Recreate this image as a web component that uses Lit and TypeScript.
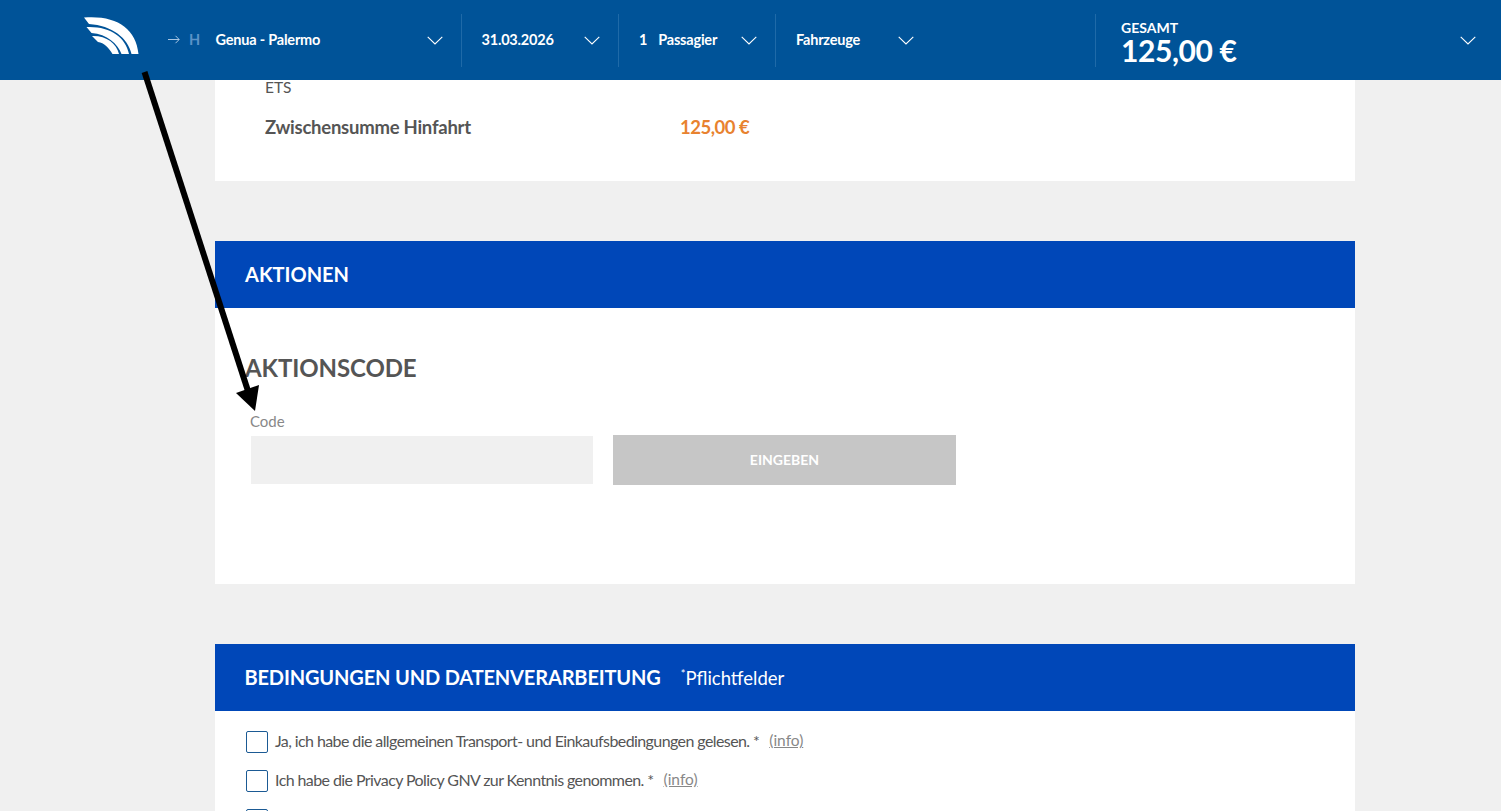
import { LitElement, html, css, svg } from 'lit';
import { customElement } from 'lit/decorators.js';

const chevron = html`<svg class="chev" width="16" height="9" viewBox="0 0 16 9" fill="none"><path d="M.7.9 8 8 15.3.9" stroke="currentColor" stroke-width="1.1"/></svg>`;

@customElement('app-root')
export class AppRoot extends LitElement {
  static styles = css`
    :host {
      display: block;
      position: relative;
      height: 811px;
      overflow: hidden;
      background: #f0f0f0;
      color: #555;
      font-family: Lato, "Open Sans", sans-serif;
    }

    .topbar {
      display: flex;
      align-items: center;
      height: 80px;
      background: #005398;
      color: #fff;
      font-size: 14.500px;
      letter-spacing: -0.2px;
      font-weight: 700;
    }
    .logo { width: 167px; align-self: flex-start; padding: 17px 0 0 84px; box-sizing: border-box; flex: none; }
    .logo svg { display: block; }

    .seg {
      display: flex;
      align-items: center;
      justify-content: space-between;
      box-sizing: border-box;
      height: 53px;
      flex: none;
      border-right: 1px solid #1f6aa8;
    }
    .seg .txt { margin-bottom: 1px; }
    .route { width: 295px; padding-right: 18px; }
    .date { width: 157px; padding: 0 18px 0 19.500px; }
    .pax { width: 157px; padding: 0 18px 0 20px; }
    .veh { width: 320px; padding: 0 181px 0 20px; }
    .route .left { display: flex; align-items: center; }
    .route .arrow { width: 21px; color: #a9c6e2; margin-left: 1px; }
    .route .arrow svg { display: block; }
    .route .h { width: 26.500px; color: #5b92c7; }
    .count { margin-right: 11px; }

    .total { flex: 1; display: flex; align-items: center; justify-content: space-between; padding: 0 25px; }
    .total .amount { padding-top: 7px; }
    .total .lbl { font-size: 14px; line-height: 14px; letter-spacing: 0; }
    .total .sum { font-size: 30px; font-weight: 700; line-height: 31px; letter-spacing: -0.4px; }

    main { width: 1140px; margin-left: 215px; }
    .card { background: #fff; }
    .summary { height: 101px; padding-left: 50px; box-sizing: border-box; }
    .ets { font-size: 15.500px; line-height: 14px; height: 14px; }
    .sub { display: flex; margin-top: 21px; font-size: 18.500px; font-weight: 700; line-height: 24px; letter-spacing: -0.25px; }
    .sub span:first-child { width: 415px; }
    .sub .price { color: #e8822f; letter-spacing: -0.5px; }

    .band {
      display: flex;
      align-items: center;
      height: 67px;
      box-sizing: border-box;
      padding: 0 0 2px 30px;
      margin-top: 60px;
      background: #0047b8;
      color: #fff;
    }
    .band h2 { margin: 0; font-size: 20px; font-weight: 700; }
    .band.long h2 { letter-spacing: -0.15px; margin-left: -0.5px; }
    .band .req { margin: 2px 0 0 20px; font-size: 18.500px; }
    .band .req sup { font-size: 11px; line-height: 0; }

    .promo { height: 276px; box-sizing: border-box; padding: 45px 0 0 30px; }
    .promo h3 { margin: 0; font-size: 24px; font-weight: 700; line-height: 30px; letter-spacing: -0.1px; }
    .field { margin: 30px 0 0 5px; font-size: 15px; line-height: 17px; color: #888; }
    .form { display: flex; align-items: center; margin: 5px 0 0 6px; }
    .input { width: 342px; height: 48px; background: #f0f0f0; }
    .send {
      width: 343px;
      height: 50px;
      margin-left: 20px;
      padding-bottom: 2px;
      box-sizing: border-box;
      display: flex;
      align-items: center;
      justify-content: center;
      background: #c6c6c6;
      color: #fff;
      font-size: 14px;
      font-weight: 700;
    }

    .terms { padding: 20px 0 0 31px; height: 200px; box-sizing: border-box; }
    .row { display: flex; align-items: center; height: 22px; margin-bottom: 17px; font-size: 16px; letter-spacing: -0.59px; }
    .row .txt { margin-bottom: 4px; }
    .box {
      width: 22px;
      height: 22px;
      box-sizing: border-box;
      flex: none;
      margin-right: 7px;
      border: 1.5px solid #1b5a94;
      border-radius: 2px;
    }
    .info { margin: 0 0 4px 10px; font-size: 15.500px; letter-spacing: 0; color: #888; text-decoration: underline; }

    .annot { position: absolute; left: 0; top: 0; pointer-events: none; }
  `;

  renderTerm(text: string) {
    return html`
      <div class="row">
        <span class="box"></span>
        <span class="txt">${text} *</span>
        <span class="info">(info)</span>
      </div>
    `;
  }

  render() {
    return html`
      <header class="topbar">
        <div class="logo">
          <svg width="55" height="37" viewBox="84 17 55 37" fill="#fff">
            ${svg`<path d="M84 17.500C116 15 136 28 138.500 54H131.500C128 38 112 25.500 89 24Z"/>
            <path d="M86.500 27C110 26 125.500 37 129 54H121.500C118 44 107 34 91.500 33Z"/>
            <path d="M92 36C106 35.500 116.500 43 119 54H112.500C109 48 104 42.500 98 42Z"/>`}
          </svg>
        </div>
        <div class="seg route">
          <div class="left txt">
            <span class="arrow"><svg width="12" height="9" viewBox="0 0 12 9" fill="none" stroke="currentColor"><path d="M0 4.500h11M7.500.8l3.700 3.700-3.700 3.700"/></svg></span>
            <span class="h">H</span>
            <span>Genua - Palermo</span>
          </div>
          ${chevron}
        </div>
        <div class="seg date"><span class="txt">31.03.2026</span>${chevron}</div>
        <div class="seg pax"><span class="txt"><span class="count">1</span>Passagier</span>${chevron}</div>
        <div class="seg veh"><span class="txt">Fahrzeuge</span>${chevron}</div>
        <div class="total">
          <div class="amount">
            <div class="lbl">GESAMT</div>
            <div class="sum">125,00 €</div>
          </div>
          ${chevron}
        </div>
      </header>

      <main>
        <section class="card summary">
          <div class="ets">ETS</div>
          <div class="sub"><span>Zwischensumme Hinfahrt</span><span class="price">125,00 €</span></div>
        </section>

        <div class="band"><h2>AKTIONEN</h2></div>
        <section class="card promo">
          <h3>AKTIONSCODE</h3>
          <div class="field">Code</div>
          <div class="form">
            <div class="input"></div>
            <div class="send">EINGEBEN</div>
          </div>
        </section>

        <div class="band long">
          <h2>BEDINGUNGEN UND DATENVERARBEITUNG</h2>
          <span class="req"><sup>*</sup>Pflichtfelder</span>
        </div>
        <section class="card terms">
          ${this.renderTerm('Ja, ich habe die allgemeinen Transport- und Einkaufsbedingungen gelesen.')}
          ${this.renderTerm('Ich habe die Privacy Policy GNV zur Kenntnis genommen.')}
          <div class="row"><span class="box"></span></div>
        </section>
      </main>

      <svg class="annot" width="300" height="430" viewBox="0 0 300 430">
        <path d="M144.500 72 248 391" stroke="#000" stroke-width="6" fill="none"/>
        <path d="M236 393 259 385 255 411Z" fill="#000"/>
      </svg>
    `;
  }
}
